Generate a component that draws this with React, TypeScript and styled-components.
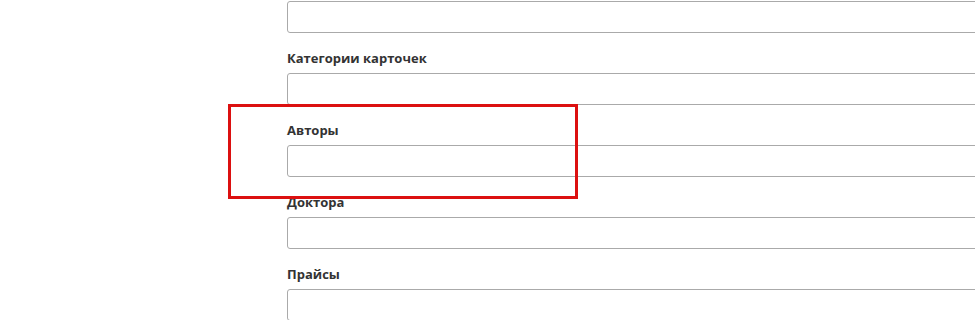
import styled, { createGlobalStyle } from "styled-components";

const GlobalStyle = createGlobalStyle`
    html, body {
        margin: 0;
        padding: 0;
        background: #ffffff;
        overflow: hidden;
    }
    body {
        font-family: "Open Sans", "Liberation Sans", Arial, sans-serif;
    }
`;

const Page = styled.div`
    position: relative;
    width: 975px;
    height: 320px;
    overflow: hidden;
`;

const Form = styled.div`
    padding: 1px 0 0 287px;
    display: flex;
    flex-direction: column;
`;

const Field = styled.div`
    display: flex;
    flex-direction: column;
`;

const Label = styled.label`
    margin: 16px 0 6px;
    height: 18px;
    line-height: 18px;
    font-size: 13px;
    font-weight: 700;
    color: #333333;
`;

const Input = styled.input`
    box-sizing: border-box;
    width: 720px;
    height: 32px;
    border: 1px solid #aaaaaa;
    border-radius: 3px;
    background: #ffffff;
    padding: 0 8px;
    font-size: 13px;
    outline: none;
`;

const Highlight = styled.div`
    position: absolute;
    left: 228px;
    top: 104px;
    width: 350px;
    height: 95px;
    box-sizing: border-box;
    border: 3px solid #dc1010;
    pointer-events: none;
`;

const fields = ["Категории карточек", "Авторы", "Доктора", "Прайсы"];

const App = () => {
    return (
        <Page>
            <GlobalStyle />
            <Form>
                <Field>
                    <Input />
                </Field>
                {fields.map((name) => (
                    <Field key={name}>
                        <Label>{name}</Label>
                        <Input />
                    </Field>
                ))}
            </Form>
            <Highlight />
        </Page>
    );
};

export default App;
